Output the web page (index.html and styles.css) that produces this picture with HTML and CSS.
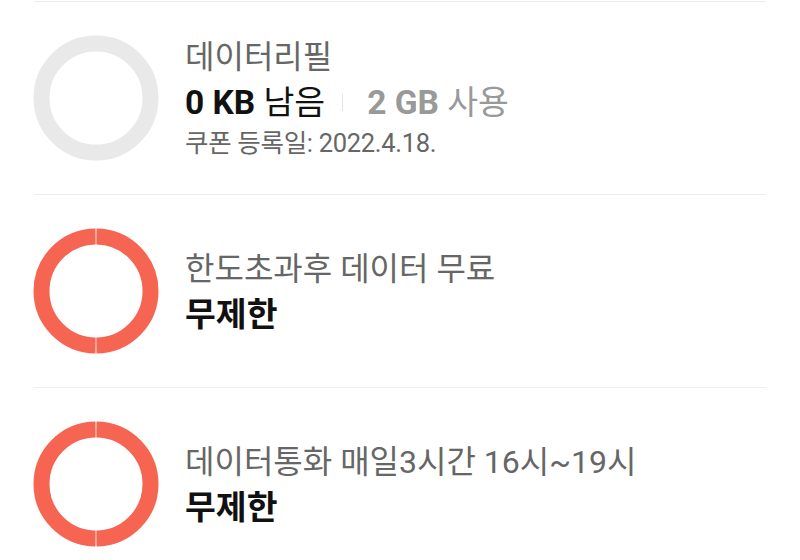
FILE: index.html
```html
<!DOCTYPE html>
<html lang="ko">
<head>
<meta charset="utf-8">
<link rel="stylesheet" href="styles.css">
</head>
<body>
<ul class="list">
  <li class="row">
    <svg class="ring" viewBox="0 0 126 126" width="126" height="126">
      <circle cx="63" cy="63" r="54.5" fill="none" stroke="#e9e9e9" stroke-width="16"/>
    </svg>
    <div class="info">
      <div class="title">데이터리필</div>
      <div class="value"><b>0 KB</b> 남음<span class="sep"></span><span class="used"><b>2 GB</b> 사용</span></div>
      <div class="sub">쿠폰 등록일: 2022.4.18.</div>
    </div>
  </li>
  <li class="row">
    <svg class="ring" viewBox="0 0 126 126" width="126" height="126">
      <circle class="red" cx="63" cy="63" r="54.5" pathLength="100" transform="rotate(-90 63 63)"/>
    </svg>
    <div class="info">
      <div class="title">한도초과후 데이터 무료</div>
      <div class="value"><b>무제한</b></div>
    </div>
  </li>
  <li class="row">
    <svg class="ring" viewBox="0 0 126 126" width="126" height="126">
      <circle class="red" cx="63" cy="63" r="54.5" pathLength="100" transform="rotate(-90 63 63)"/>
    </svg>
    <div class="info">
      <div class="title">데이터통화 매일3시간 16시~19시</div>
      <div class="value"><b>무제한</b></div>
    </div>
  </li>
</ul>
</body>
</html>
```
FILE: styles.css
```css
html, body {
  margin: 0;
  padding: 0;
  background: #fff;
}
body {
  font-family: Roboto, "Noto Sans CJK KR", sans-serif;
  width: 800px;
  height: 560px;
  overflow: hidden;
}
.list {
  list-style: none;
  margin: 0;
  padding: 1px 34px 0;
}
.row {
  display: flex;
  align-items: center;
  height: 192px;
  border-top: 1px solid #eeeeee;
}
.ring {
  flex: none;
  margin-left: -1px;
  display: block;
}
.red {
  fill: none;
  stroke: #f66452;
  stroke-width: 16;
  stroke-dasharray: 49.75 0.25;
  stroke-dashoffset: -0.125;
}
.info {
  margin-left: 26px;
  display: flex;
  flex-direction: column;
}
.title {
  font-size: 32px;
  line-height: 46px;
  color: #666;
}
.value {
  font-size: 33.5px;
  line-height: 45px;
  color: #111;
  display: flex;
  align-items: center;
  white-space: pre;
}
.value b {
  font-weight: 700;
}
.sep {
  display: inline-block;
  width: 1px;
  height: 17px;
  background: #e4e4e4;
  margin: 0 24px 0 17px;
}
.used {
  color: #999;
}
.sub {
  font-size: 25.5px;
  line-height: 37px;
  color: #666;
  letter-spacing: -0.3px;
}
```
